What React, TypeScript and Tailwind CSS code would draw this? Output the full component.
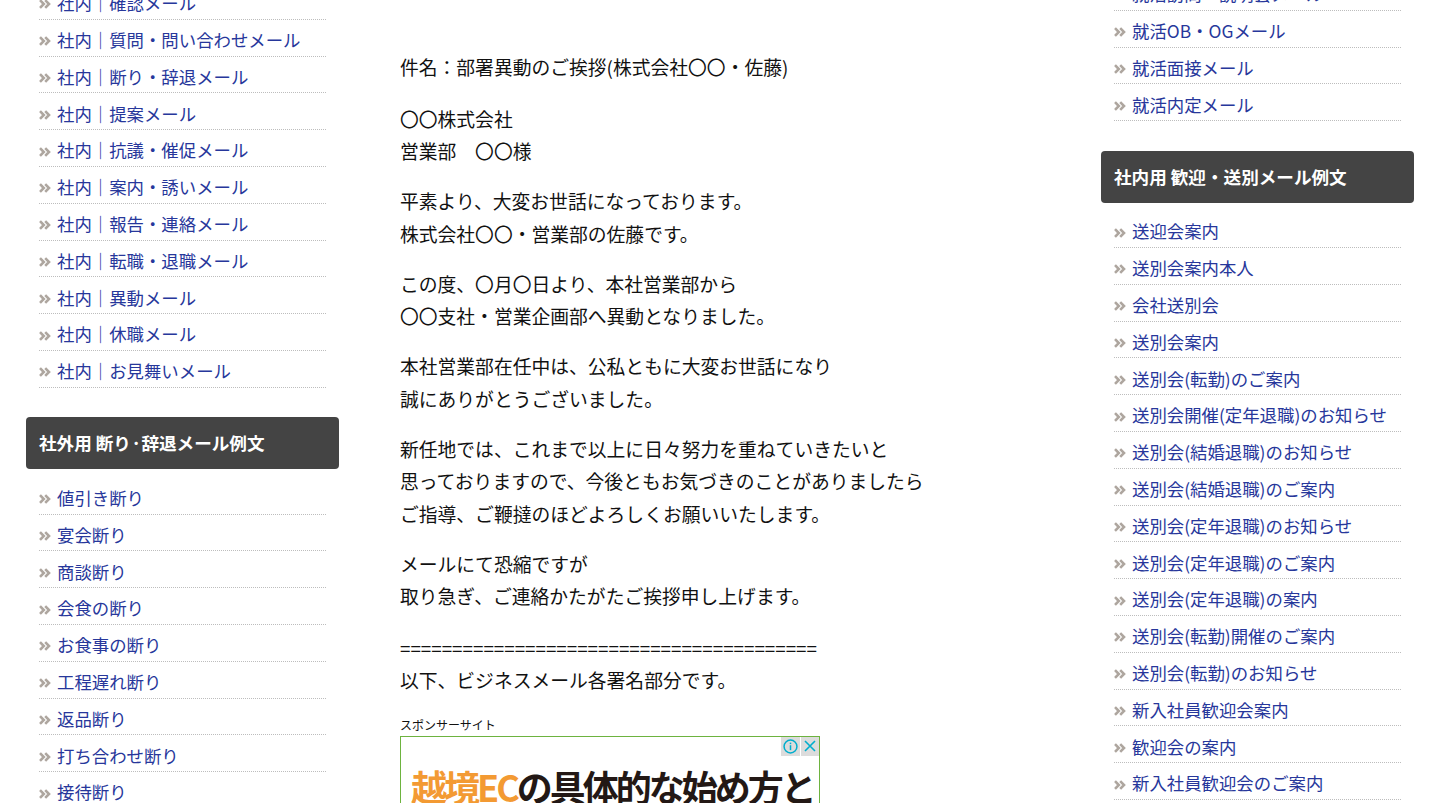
const leftTop = [
  '社内｜確認メール',
  '社内｜質問・問い合わせメール',
  '社内｜断り・辞退メール',
  '社内｜提案メール',
  '社内｜抗議・催促メール',
  '社内｜案内・誘いメール',
  '社内｜報告・連絡メール',
  '社内｜転職・退職メール',
  '社内｜異動メール',
  '社内｜休職メール',
  '社内｜お見舞いメール',
];

const leftBottom = [
  '値引き断り',
  '宴会断り',
  '商談断り',
  '会食の断り',
  'お食事の断り',
  '工程遅れ断り',
  '返品断り',
  '打ち合わせ断り',
  '接待断り',
];

const rightTop = ['就活訪問・説明会メール', '就活OB・OGメール', '就活面接メール', '就活内定メール'];

const rightBottom = [
  '送迎会案内',
  '送別会案内本人',
  '会社送別会',
  '送別会案内',
  '送別会(転勤)のご案内',
  '送別会開催(定年退職)のお知らせ',
  '送別会(結婚退職)のお知らせ',
  '送別会(結婚退職)のご案内',
  '送別会(定年退職)のお知らせ',
  '送別会(定年退職)のご案内',
  '送別会(定年退職)の案内',
  '送別会(転勤)開催のご案内',
  '送別会(転勤)のお知らせ',
  '新入社員歓迎会案内',
  '歓迎会の案内',
  '新入社員歓迎会のご案内',
];

const body = [
  ['件名：部署異動のご挨拶(株式会社〇〇・佐藤)'],
  ['〇〇株式会社', '営業部　〇〇様'],
  ['平素より、大変お世話になっております。', '株式会社〇〇・営業部の佐藤です。'],
  ['この度、〇月〇日より、本社営業部から', '〇〇支社・営業企画部へ異動となりました。'],
  ['本社営業部在任中は、公私ともに大変お世話になり', '誠にありがとうございました。'],
  [
    '新任地では、これまで以上に日々努力を重ねていきたいと',
    '思っておりますので、今後ともお気づきのことがありましたら',
    'ご指導、ご鞭撻のほどよろしくお願いいたします。',
  ],
  ['メールにて恐縮ですが', '取り急ぎ、ご連絡かたがたご挨拶申し上げます。'],
  ['========================================', '以下、ビジネスメール各署名部分です。'],
];

function Chevron() {
  return (
    <svg width="12" height="10" viewBox="0 0 12 10" className="mr-[6px] mt-[3px] shrink-0">
      <polyline points="1,1.2 4.8,5 1,8.8" fill="none" stroke="#aea69f" strokeWidth="2.6" />
      <polyline points="6.2,1.2 10,5 6.2,8.8" fill="none" stroke="#aea69f" strokeWidth="2.6" />
    </svg>
  );
}

function LinkList({ items }: { items: string[] }) {
  return (
    <ul className="px-[13px]">
      {items.map((t) => (
        <li
          key={t}
          className="h-[36.8px] flex items-center pt-[4px] border-b border-dotted border-[#bdbdbd]"
        >
          <Chevron />
          <a href="#" className="text-[17.4px] leading-none text-[#27379b] whitespace-nowrap">
            {t}
          </a>
        </li>
      ))}
    </ul>
  );
}

function SideHeader({ children }: { children: string }) {
  return (
    <div className="h-[52px] flex items-center px-[13px] bg-[#444444] rounded-[4px] text-white font-bold text-[17.6px] whitespace-nowrap">
      {children}
    </div>
  );
}

export default function App() {
  return (
    <div
      className="h-[803px] overflow-hidden bg-white flex px-[26px]"
      style={{ fontFamily: '"Noto Sans CJK JP", "Noto Sans", sans-serif' }}
    >
      {/* Left sidebar */}
      <aside className="w-[313px] shrink-0 -mt-[17px]">
        <LinkList items={leftTop} />
        <div className="mt-[29px]">
          <SideHeader>社外用 断り·辞退メール例文</SideHeader>
        </div>
        <div className="mt-[9px]">
          <LinkList items={leftBottom} />
        </div>
      </aside>

      {/* Main content */}
      <main className="flex-1 pl-[61px] pt-[51px] text-[#111]">
        {body.map((lines, i) => (
          <p
            key={i}
            className={`text-[18.8px] leading-[32.5px] ${i === 0 ? 'mb-[19px]' : i === 6 ? 'mb-[19px]' : 'mb-[17.5px]'}`}
          >
            {lines.map((l, j) => (
              <span key={j} className="block whitespace-nowrap">
                {l}
              </span>
            ))}
          </p>
        ))}
        <div className="mt-[20px] text-[12px] leading-[16px]">スポンサーサイト</div>
        <div className="mt-[3px] w-[420px] h-[120px] border border-[#6db33f] relative overflow-hidden">
          <div className="absolute top-0 right-0 flex gap-[1px]">
            <span className="w-[19px] h-[19px] bg-[#dcdcdc] flex items-center justify-center">
              <svg width="15" height="15" viewBox="0 0 14 14">
                <circle cx="7" cy="7" r="6" fill="none" stroke="#00aecd" strokeWidth="1.4" />
                <rect x="6.3" y="5.8" width="1.4" height="4.6" fill="#00aecd" />
                <rect x="6.3" y="3.4" width="1.4" height="1.4" fill="#00aecd" />
              </svg>
            </span>
            <span className="w-[18px] h-[19px] bg-[#dcdcdc] flex items-center justify-center">
              <svg width="14" height="14" viewBox="0 0 14 14">
                <path d="M2 2 L12 12 M12 2 L2 12" stroke="#00aecd" strokeWidth="1.6" />
              </svg>
            </span>
          </div>
          <div className="pt-[27px] pl-[10px] text-[36px] font-bold leading-[44px] tracking-[-3px] whitespace-nowrap text-[#231815]">
            <span className="text-[#f39a33]">越境EC</span>の具体的な始め方と
          </div>
        </div>
      </main>

      {/* Right sidebar */}
      <aside className="w-[313px] shrink-0 -mt-[26px]">
        <LinkList items={rightTop} />
        <div className="mt-[30px]">
          <SideHeader>社内用 歓迎・送別メール例文</SideHeader>
        </div>
        <div className="mt-[8px]">
          <LinkList items={rightBottom} />
        </div>
      </aside>
    </div>
  );
}
